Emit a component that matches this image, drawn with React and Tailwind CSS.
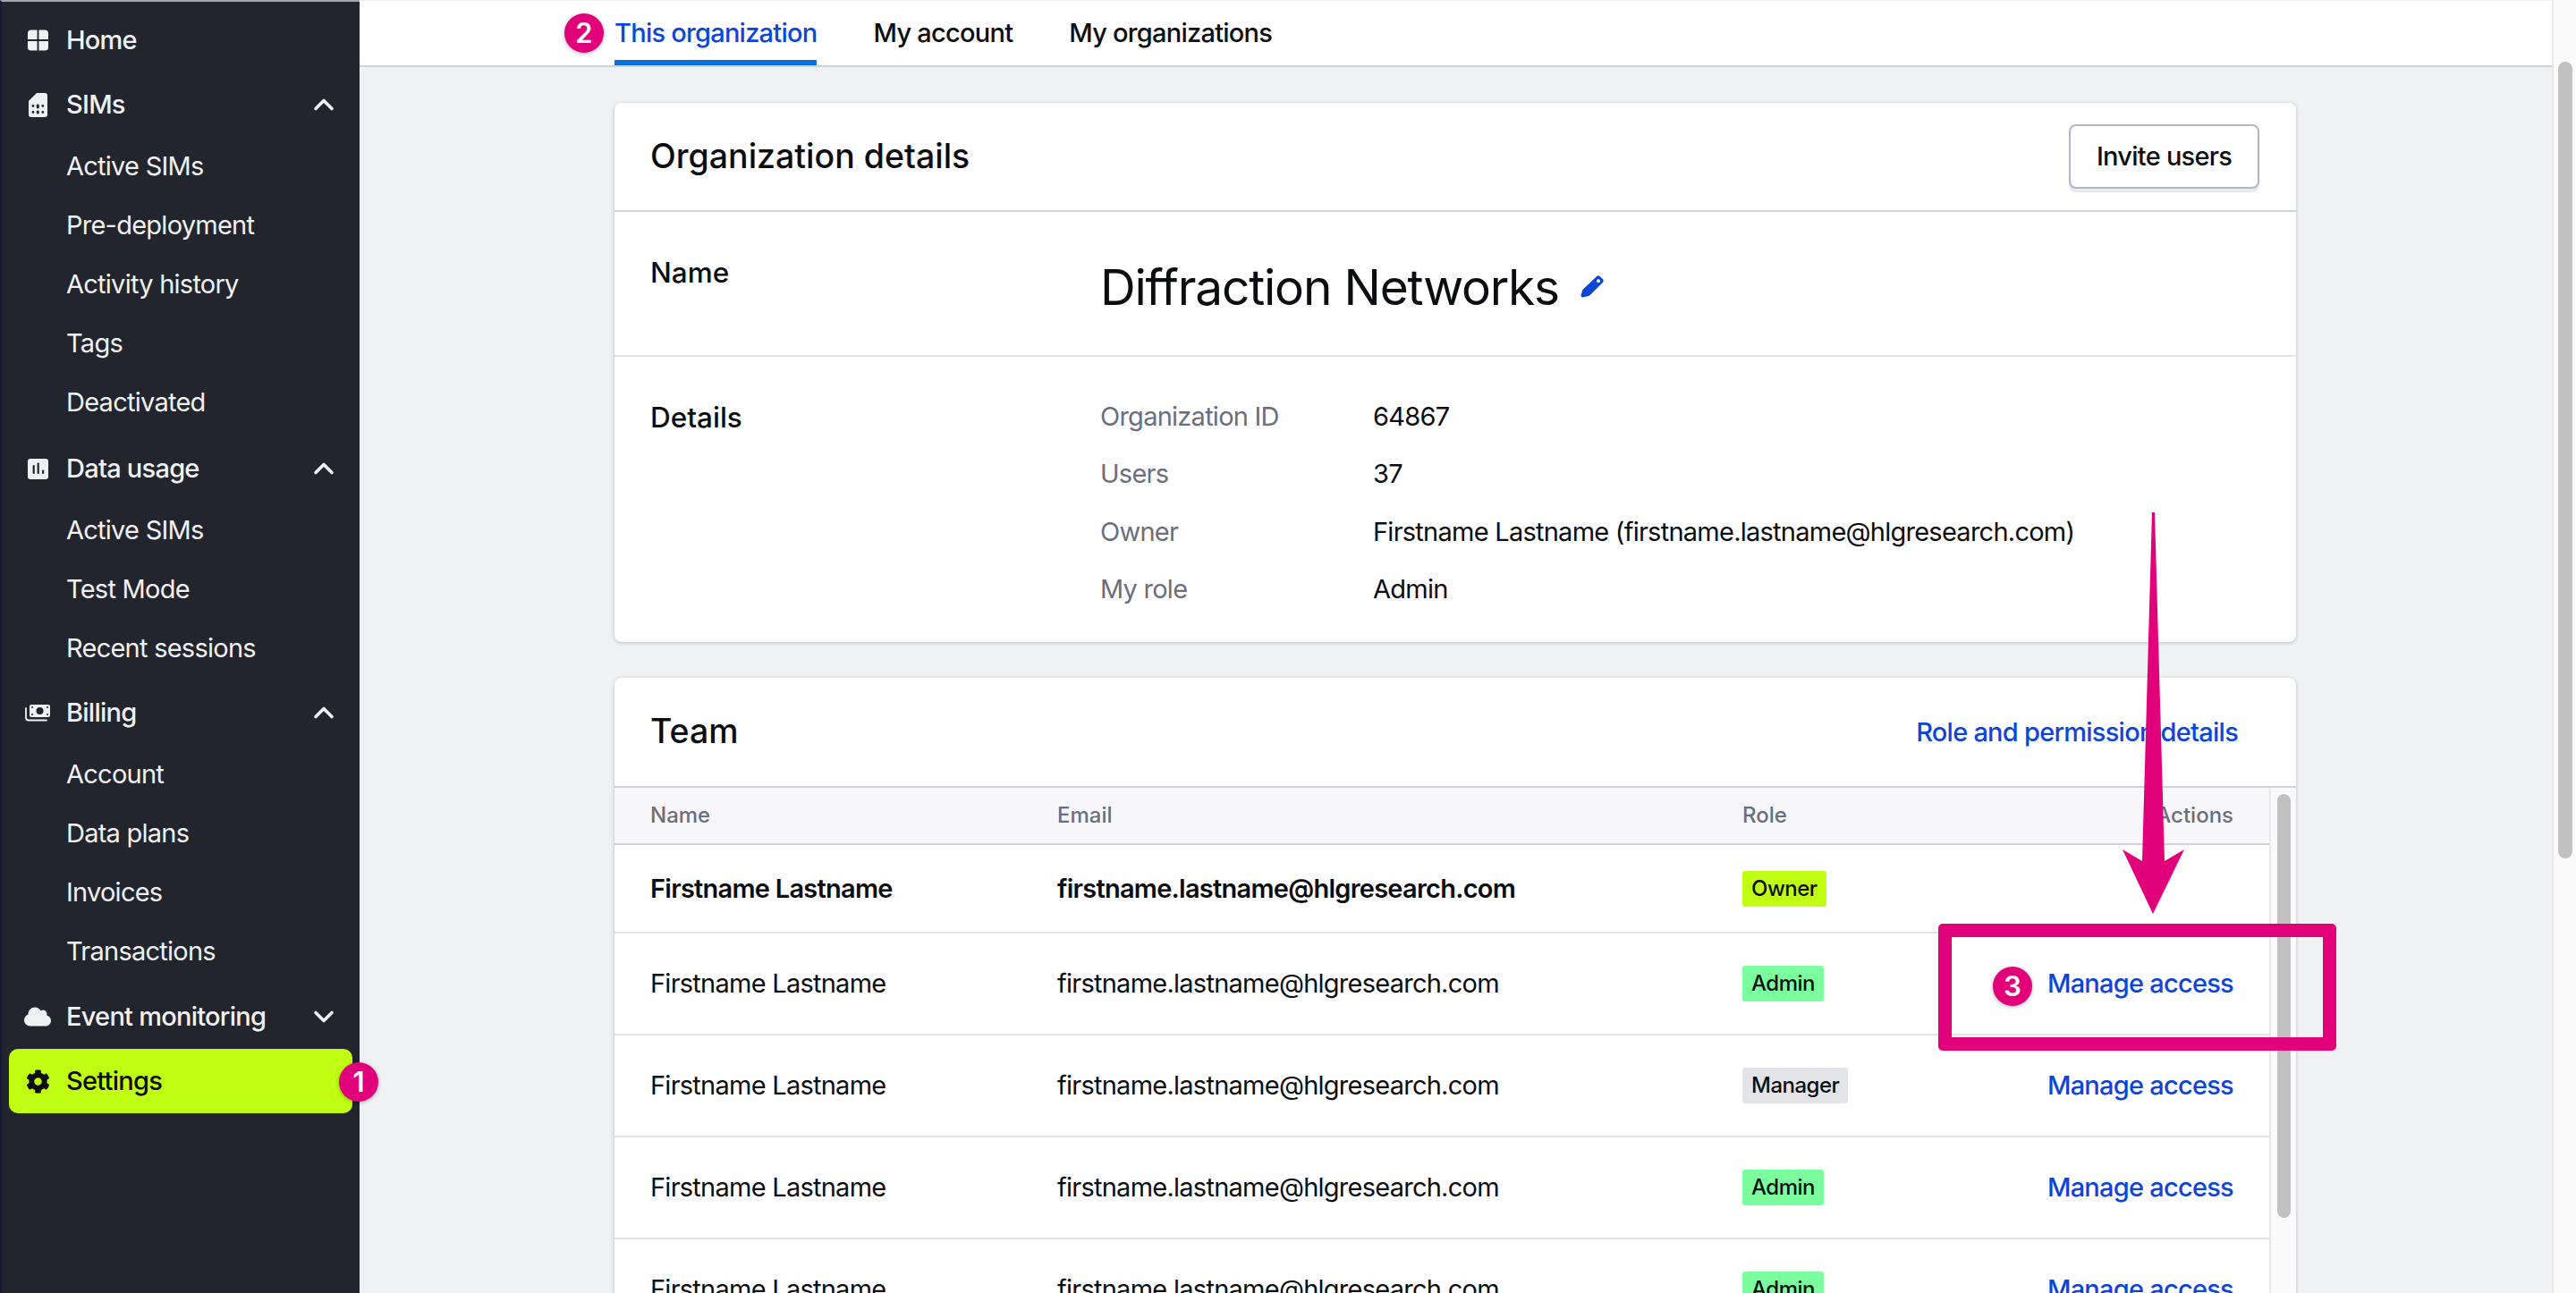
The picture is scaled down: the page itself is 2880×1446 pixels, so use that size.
import React from 'react';
import { ChevronDown, ChevronUp } from 'lucide-react';
import { FaCloud, FaCog } from 'react-icons/fa';

const HomeIcon = () => (
    <svg viewBox="0 0 24 24" className="h-[24px] w-[23px]" fill="#f0f1f3">
        <path d="M4 0h7v11H0V4a4 4 0 0 1 4-4zM13 0h7a4 4 0 0 1 4 4v7H13zM0 13h11v11H4a4 4 0 0 1-4-4zM13 13h11v7a4 4 0 0 1-4 4h-7z" />
    </svg>
);

const SimIcon = () => (
    <svg viewBox="0 0 21 27" className="h-[27px] w-[21px]">
        <path fill="#f0f1f3" d="M9 0h9a3 3 0 0 1 3 3v21a3 3 0 0 1-3 3H3a3 3 0 0 1-3-3V9z" />
        <g fill="#22252d">
            <circle cx="5" cy="14.5" r="1.4" />
            <rect x="8.8" y="12.5" width="3" height="5" rx="1.4" />
            <circle cx="15.8" cy="14.5" r="1.4" />
            <circle cx="5" cy="21.5" r="1.4" />
            <rect x="8.8" y="19.5" width="3" height="4" rx="1.4" />
            <circle cx="15.8" cy="21.5" r="1.4" />
        </g>
    </svg>
);

const UsageIcon = () => (
    <svg viewBox="0 0 23 23" className="h-[23px] w-[23px]">
        <rect width="23" height="23" rx="3" fill="#f0f1f3" />
        <g fill="#22252d">
            <rect x="5.6" y="7" width="2.2" height="10" rx="1" />
            <rect x="10.6" y="4.5" width="2.2" height="12.5" rx="1" />
            <rect x="16" y="12.5" width="2.2" height="4.5" rx="1" />
        </g>
    </svg>
);

const BillingIcon = () => (
    <svg viewBox="0 0 30 20" className="h-[20px] w-[30px]">
        <rect x="6" y="1" width="23" height="14" rx="2" fill="#f0f1f3" />
        <circle cx="17.5" cy="8" r="4" fill="#22252d" />
        <g fill="#22252d">
            <circle cx="9" cy="4" r="1" />
            <circle cx="26" cy="4" r="1" />
            <circle cx="9" cy="12" r="1" />
            <circle cx="26" cy="12" r="1" />
        </g>
        <path d="M2 5v10.5a3 3 0 0 0 3 3h20" fill="none" stroke="#f0f1f3" strokeWidth="1.8" strokeLinecap="round" />
    </svg>
);

const PencilIcon = () => (
    <svg viewBox="0 0 26 26" className="h-[26px] w-[26px]">
        <path fill="#0b46d6" fillRule="evenodd" d="M18 1.2a3 3 0 0 1 4 0l2.8 2.8a3 3 0 0 1 0 4L11 21.8c-.6.6-1.3 1-2.1 1.2l-5.9 1.4c-1.6.4-3-1-2.4-2.6l1.6-5c.2-.7.6-1.4 1.2-1.9zM20 4.2a2 2 0 1 0 0 4 2 2 0 0 0 0-4z" />
    </svg>
);

const navGroups = [
    { label: 'Home', icon: <HomeIcon /> },
    { label: 'SIMs', icon: <SimIcon />, open: true, pb: 'pb-[5px]', items: ['Active SIMs', 'Pre-deployment', 'Activity history', 'Tags', 'Deactivated'] },
    { label: 'Data usage', icon: <UsageIcon />, open: true, pb: 'pb-[3px]', items: ['Active SIMs', 'Test Mode', 'Recent sessions'] },
    { label: 'Billing', icon: <BillingIcon />, open: true, pb: 'pb-[4px]', items: ['Account', 'Data plans', 'Invoices', 'Transactions'] },
    { label: 'Event monitoring', icon: <FaCloud className="h-[30px] w-[30px]" />, open: false },
];

const members = [
    { role: 'Owner', owner: true },
    { role: 'Admin' },
    { role: 'Manager' },
    { role: 'Admin' },
    { role: 'Admin' },
];

const roleColors = {
    Owner: 'bg-[#c0ff14]',
    Admin: 'bg-[#7bff9e]',
    Manager: 'bg-[#e3e4e8]',
};

const details = [
    ['Organization ID', '64867'],
    ['Users', '37'],
    ['Owner', 'Firstname Lastname (firstname.lastname@hlgresearch.com)'],
    ['My role', 'Admin'],
];

function Sidebar() {
    return (
        <aside className="h-full w-[402px] shrink-0 border-l-2 border-t-2 border-l-[#14193a] border-t-[#a3a5a8] bg-[#22252d] pt-[7px] text-[#f0f1f3]">
            {navGroups.map((group) => (
                <div key={group.label} className={group.pb}>
                    <div className="mx-[8px] flex h-[72px] items-center text-[29px] font-medium">
                        <span className="ml-[16px] mr-[16px] flex w-[32px] justify-center">{group.icon}</span>
                        {group.label}
                        {group.open === true && <ChevronUp className="ml-auto mr-[14px] h-[36px] w-[36px]" strokeWidth={2.4} />}
                        {group.open === false && <ChevronDown className="ml-auto mr-[14px] h-[36px] w-[36px]" strokeWidth={2.4} />}
                    </div>
                    {group.items?.map((item) => (
                        <div key={item} className="flex h-[66px] items-center pl-[72px] text-[29px]">
                            {item}
                        </div>
                    ))}
                </div>
            ))}
            <div className="mx-[8px] flex h-[72px] items-center rounded-[10px] bg-[#c0ff14] text-[29px] font-medium text-[#0c0d10]">
                <span className="ml-[16px] mr-[16px] flex w-[32px] justify-center">
                    <FaCog className="h-[27px] w-[27px]" />
                </span>
                Settings
            </div>
        </aside>
    );
}

function Tabs() {
    return (
        <div className="flex h-[75px] shrink-0 gap-[63px] border-b-2 border-t border-b-[#d1d3da] border-t-[#f0f1f3] bg-white pl-[285px] text-[29px] font-medium">
            <div className="flex items-center border-b-[6px] border-[#0b6fe8] pt-[6px] text-[#0b46d6]">This organization</div>
            <div className="flex items-center text-[#0c0d10]">My account</div>
            <div className="flex items-center text-[#0c0d10]">My organizations</div>
        </div>
    );
}

function OrganizationCard() {
    return (
        <section className="h-[603px] w-[1880px] rounded-[8px] bg-white shadow-[0_1px_4px_rgba(30,35,60,0.25)]">
            <div className="flex h-[122px] items-center justify-between border-b-2 border-[#d1d3da] pl-[40px] pr-[41px]">
                <h2 className="pt-[1px] text-[37.5px] font-medium tracking-normal text-[#0c0d10]">Organization details</h2>
                <button className="h-[72px] w-[213px] rounded-[8px] border-2 border-[#b3b6c6] bg-white text-[29px] font-medium text-[#0c0d10] shadow-[0_4px_0_#e8e9ed]">
                    Invite users
                </button>
            </div>
            <div className="flex h-[162px] border-b-2 border-[#e3e4e8] pl-[40px]">
                <div className="w-[503px] pt-[48px] text-[31.5px] font-medium leading-[40px] tracking-normal text-[#0c0d10]">Name</div>
                <div className="flex h-fit items-center gap-[24px] pt-[50px]">
                    <span className="text-[55px] font-normal leading-[68px] tracking-[-1.2px] text-[#0c0d10]">Diffraction Networks</span>
                    <PencilIcon />
                </div>
            </div>
            <div className="flex pl-[40px] pt-[34px]">
                <div className="w-[503px] pt-[2px] text-[31.5px] font-medium leading-[64px] tracking-normal text-[#0c0d10]">Details</div>
                <div className="grid grid-cols-[305px_1fr] auto-rows-[64.5px] items-center text-[29px]">
                    {details.map(([label, value]) => (
                        <React.Fragment key={label}>
                            <span className="text-[#6b6e7c]">{label}</span>
                            <span className="text-[#0c0d10]">{value}</span>
                        </React.Fragment>
                    ))}
                </div>
            </div>
        </section>
    );
}

function TeamCard() {
    return (
        <section className="mt-[40px] w-[1880px] rounded-t-[8px] bg-white shadow-[0_1px_4px_rgba(30,35,60,0.25)]">
            <div className="flex h-[123px] items-center justify-between border-b-2 border-[#d1d3da] pl-[40px] pr-[65px]">
                <h2 className="text-[37.5px] font-medium tracking-normal text-[#0c0d10]">Team</h2>
                <a className="text-[29px] font-medium text-[#0b46d6]">Role and permission details</a>
            </div>
            <div className="flex">
                <div className="w-[1850px]">
                    <div className="grid h-[64px] grid-cols-[455px_766px_1fr_auto] items-center border-b-2 border-[#d1d3da] bg-[#f7f7f9] pl-[40px] pr-[40px] text-[24px] font-medium tracking-normal text-[#6b6e7c]">
                        <span>Name</span>
                        <span>Email</span>
                        <span>Role</span>
                        <span>Actions</span>
                    </div>
                    {members.map((member, index) => (
                        <div
                            key={index}
                            className={`grid grid-cols-[455px_766px_1fr_auto] items-center border-b-2 border-[#e3e4e8] pl-[40px] pr-[40px] text-[29px] text-[#0c0d10] ${member.owner ? 'h-[99px] font-semibold' : 'h-[114px]'}`}
                        >
                            <span>Firstname Lastname</span>
                            <span>firstname.lastname@hlgresearch.com</span>
                            <span className="flex">
                                <span className={`flex h-[40px] items-center rounded-[3px] px-[10px] text-[24px] font-medium tracking-[-0.5px] ${roleColors[member.role]}`}>
                                    {member.role}
                                </span>
                            </span>
                            {member.owner ? <span /> : <a className="font-medium text-[#0b46d6]">Manage access</a>}
                        </div>
                    ))}
                </div>
                <div className="w-[30px] border-l-2 border-[#e8e8e8] bg-[#fafafa] pt-[7px]">
                    <div className="mx-auto h-[474px] w-[15px] rounded-full bg-[#c1c1c1]" />
                </div>
            </div>
        </section>
    );
}

function NumberBadge({ n, className }) {
    return (
        <div className={`absolute flex h-[44px] w-[44px] items-center justify-center rounded-full bg-[#e2007a] text-[31px] font-semibold tracking-normal text-white shadow-[0_1px_4px_rgba(0,0,0,0.3)] ${className}`}>
            {n}
        </div>
    );
}

export default function App() {
    return (
        <div className="relative flex h-[1446px] w-[2880px] overflow-hidden bg-[#f0f1f3] font-[Inter,sans-serif] tracking-[-0.75px]">
            <Sidebar />
            <main className="flex min-w-0 flex-1 flex-col">
                <Tabs />
                <div className="flex-1 overflow-hidden pl-[285px] pt-[40px]">
                    <OrganizationCard />
                    <TeamCard />
                </div>
            </main>
            <div className="w-[27px] shrink-0 border-l-2 border-[#e8e8e8] bg-[#fafafa] pt-[69px]">
                <div className="mx-auto h-[891px] w-[16px] rounded-full bg-[#c1c1c1]" />
            </div>

            {/* annotations drawn over the page */}
            <NumberBadge n="1" className="left-[379px] top-[1188px]" />
            <NumberBadge n="2" className="left-[631px] top-[15px]" />
            <NumberBadge n="3" className="left-[2228px] top-[1081px]" />
            <div className="absolute left-[2167px] top-[1033px] h-[142px] w-[445px] rounded-[5px] border-[15px] border-[#e2007a]" />
            <svg className="absolute left-0 top-0 h-[1446px] w-[2880px]" viewBox="0 0 2880 1446" fill="#e2007a">
                <polygon points="2406,573 2409,573 2420,963 2442,950 2407,1022 2373,950 2395,963" />
            </svg>
        </div>
    );
}
